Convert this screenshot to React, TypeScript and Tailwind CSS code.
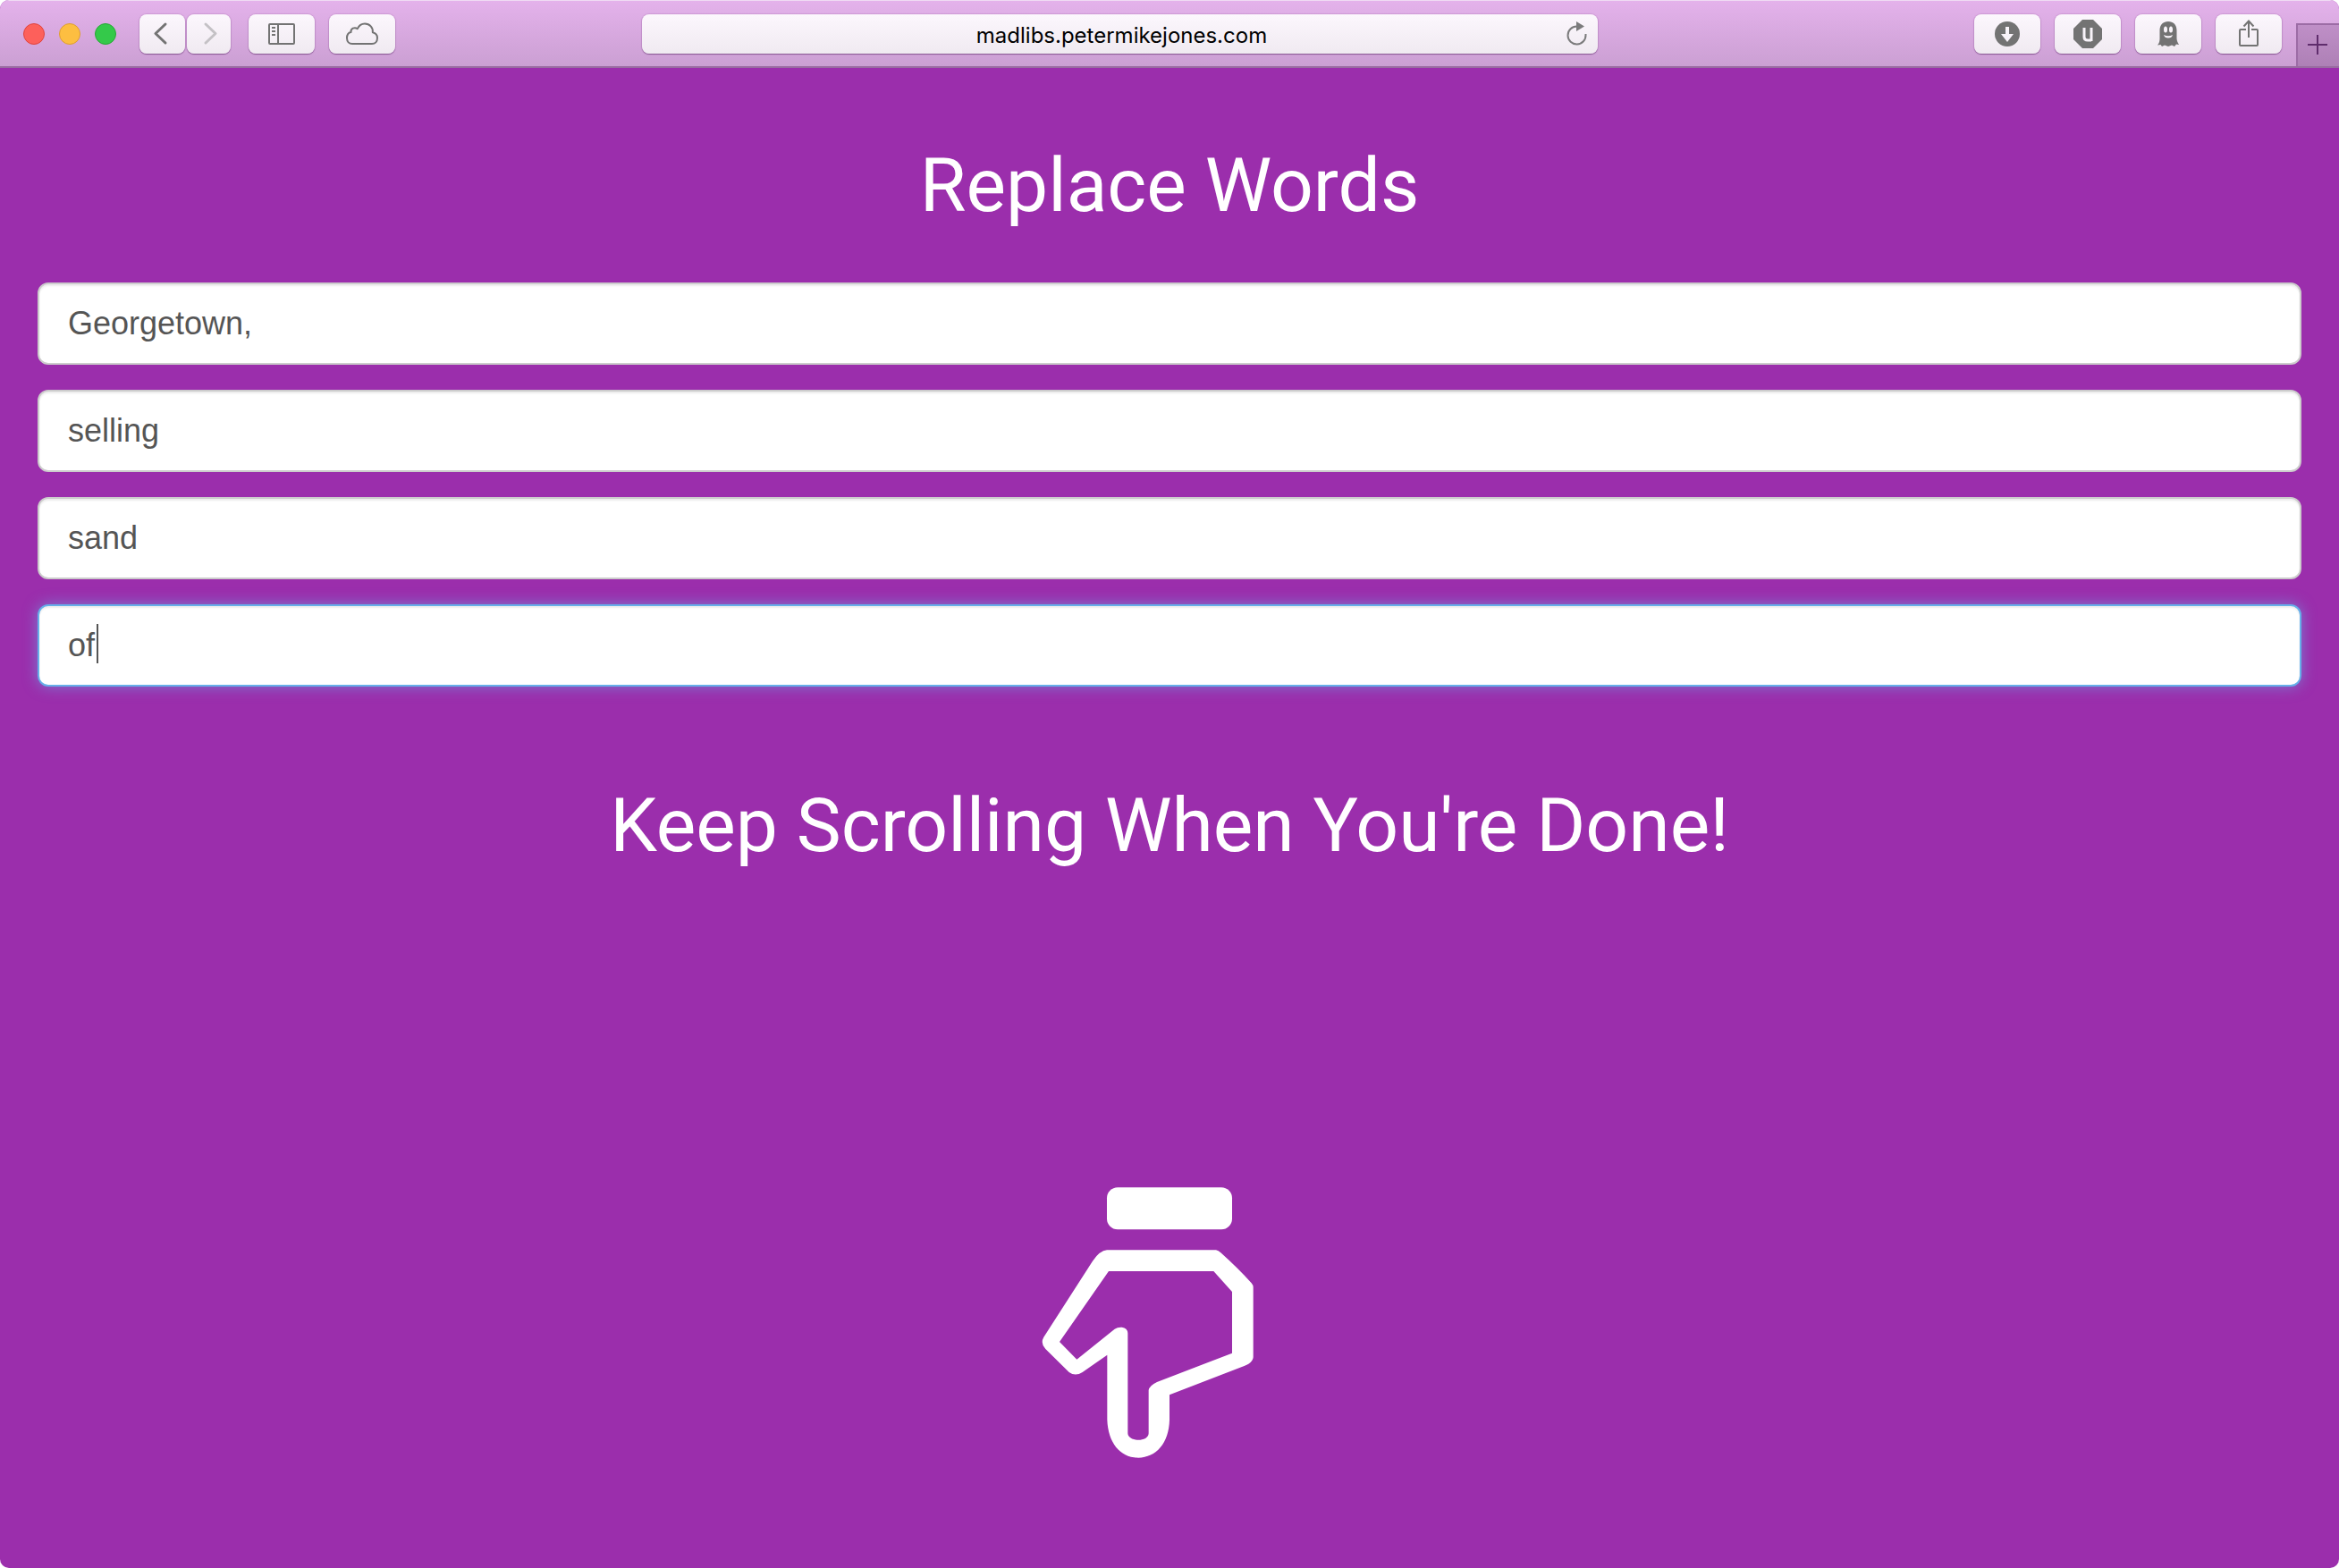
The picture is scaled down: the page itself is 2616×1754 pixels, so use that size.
import type { ReactNode } from "react";

const words = ["Georgetown,", "selling", "sand", "of"];

function ToolButton({ label, size = "w-[74px]", children }: { label: string; size?: string; children: ReactNode }) {
  return (
    <button
      type="button"
      aria-label={label}
      className={`flex h-11 shrink-0 items-center justify-center rounded-lg bg-linear-to-b from-[#fcf7fd] to-[#f0eaf1] text-[#737373] shadow-[0_1px_1px_rgba(90,40,100,0.55),0_0_1px_1px_rgba(150,90,160,0.25)] ${size}`}
    >
      {children}
    </button>
  );
}

function Toolbar() {
  return (
    <header className="flex h-[76px] items-start border-t border-b-2 border-t-[#f0dbf4] border-b-[#996ba1] bg-linear-to-b from-[#e4b2eb] to-[#cb9fd3] pt-[15px]">
      <div className="flex h-11 items-center gap-4 pl-[26px]">
        <button type="button" aria-label="Close" className="size-6 rounded-full border border-[#e0443e] bg-[#fd605b]" />
        <button type="button" aria-label="Minimize" className="size-6 rounded-full border border-[#dd9e33] bg-[#fdbe41]" />
        <button type="button" aria-label="Zoom" className="size-6 rounded-full border border-[#28a836] bg-[#34c94a]" />
      </div>
      <nav className="flex pl-[26px]">
        <div className="flex gap-0.5">
          <ToolButton label="Back" size="w-[51px]">
            <svg width="50" height="44" viewBox="0 0 50 44" fill="none" stroke="currentColor" strokeWidth="3" strokeLinecap="round" strokeLinejoin="round">
              <path d="M28 11 17 21.500 28 32" />
            </svg>
          </ToolButton>
          <ToolButton label="Forward" size="w-[49px]">
            <svg width="48" height="44" viewBox="0 0 48 44" fill="none" stroke="#c4c1c5" strokeWidth="3" strokeLinecap="round" strokeLinejoin="round">
              <path d="M20 11 31 21.500 20 32" />
            </svg>
          </ToolButton>
        </div>
        <div className="flex gap-4 pl-5">
          <ToolButton label="Sidebar">
            <svg width="74" height="44" viewBox="0 0 74 44" fill="none" stroke="currentColor" strokeWidth="2">
              <rect x="23" y="11" width="28" height="22" rx="1" />
              <path d="M33 11V33M26 15h4M26 19h4M26 23h4" />
            </svg>
          </ToolButton>
          <ToolButton label="iCloud Tabs">
            <svg width="74" height="44" viewBox="0 0 74 44" fill="none" stroke="currentColor" strokeWidth="2" strokeLinejoin="round">
              <path d="M26 33C22.500 33 20 30.500 20 26.500C20 23 22 20.500 24.500 20C24 16 28.500 13.800 31.800 16.200C33.500 12.500 36.500 10.500 40 10.500C45.500 10.500 49.500 15 48.800 20.200C52 20.800 54 23.300 54 26.500C54 30.500 51.500 33 48 33Z" />
            </svg>
          </ToolButton>
        </div>
      </nav>
      <div className="flex-[276]" />
      <div className="flex-[1069]">
        <div className="flex h-11 items-center rounded-lg bg-linear-to-b from-[#fcf7fd] to-[#f0eaf1] pr-2.5 pl-10 shadow-[0_1px_1px_rgba(90,40,100,0.55),0_0_1px_1px_rgba(150,90,160,0.25)]">
          <input
            type="text"
            aria-label="Address"
            defaultValue="madlibs.petermikejones.com"
            className="h-11 min-w-0 flex-1 bg-transparent pt-0.5 text-center font-['Inter',sans-serif] text-2xl text-black outline-none"
          />
          <button type="button" aria-label="Reload" className="text-[#7b7b7c]">
            <svg width="26" height="44" viewBox="0 0 26 44" fill="none">
              <path d="M13.500 13.500H12.500A10 10 0 1 0 22.500 23V22" stroke="currentColor" strokeWidth="2" />
              <path d="M12 8 21 13.500 12 19Z" fill="currentColor" />
            </svg>
          </button>
        </div>
      </div>
      <div className="flex-[421]" />
      <nav className="flex gap-4">
        <ToolButton label="Downloads">
          <svg width="74" height="44" viewBox="0 0 74 44">
            <circle cx="37" cy="22" r="14" fill="currentColor" />
            <path d="M35 14h4v8h5l-7 9-7-9h5Z" fill="#f8f3f9" />
          </svg>
        </ToolButton>
        <ToolButton label="Content blocker">
          <svg width="74" height="44" viewBox="0 0 74 44">
            <path d="M31 6H43L53 16V28L43 38H31L21 28V16Z" fill="currentColor" />
            <path d="M33 15V25.500Q33 29 37 29H41M41 15V30" fill="none" stroke="#f8f3f9" strokeWidth="3" />
          </svg>
        </ToolButton>
        <ToolButton label="Ghostery">
          <svg width="74" height="44" viewBox="0 0 74 44">
            <path d="M27.500 18C27.500 11.500 31.500 8 37 8S46.500 11.500 46.500 18V27C46.500 30 48 32 49 34L46 33.500 44 36 41 34.500 37 36 33 34.500 30 36 28.500 34 25 34.500C27 32 27.500 30 27.500 27Z" fill="currentColor" />
            <ellipse cx="34" cy="17" rx="2" ry="3.500" fill="#f8f3f9" />
            <ellipse cx="40" cy="17" rx="2" ry="3.500" fill="#f8f3f9" />
            <path d="M32 23Q37 25.500 42 23Q41 26.500 37 26.500T32 23Z" fill="#f8f3f9" />
          </svg>
        </ToolButton>
        <ToolButton label="Share">
          <svg width="74" height="44" viewBox="0 0 74 44" fill="none" stroke="currentColor" strokeWidth="2">
            <path d="M34 17H28Q27 17 27 18V34Q27 35 28 35H46Q47 35 47 34V18Q47 17 46 17H40M37 26V8M31.500 13.500 37 7.500 42.500 13.500" />
          </svg>
        </ToolButton>
      </nav>
      <button
        type="button"
        aria-label="New tab"
        className="mt-[10px] ml-4 flex h-12 w-12 shrink-0 items-center justify-center border-t-2 border-l-2 border-[#9c6ca5] bg-linear-to-b from-[#bf8fc7] to-[#ae80b6] pr-0.5 pb-0.5"
      >
        <svg width="22" height="22" viewBox="0 0 22 22" stroke="#5f2d6c" strokeWidth="2">
          <path d="M11 0V22M0 11H22" />
        </svg>
      </button>
    </header>
  );
}

function WordField({ value, index, active }: { value: string; index: number; active: boolean }) {
  return (
    <div className="relative">
      <input
        type="text"
        aria-label={`Word ${index + 1}`}
        defaultValue={value}
        className={`block h-[92px] w-full rounded-xl border-2 bg-white px-8 font-['Liberation_Sans',sans-serif] text-4xl text-[#555555] outline-none ${
          active
            ? "border-[#66afe9] shadow-[inset_0_2px_2px_rgba(0,0,0,0.075),0_0_16px_rgba(102,175,233,0.6)]"
            : "border-[#cccccc] shadow-[inset_0_2px_2px_rgba(0,0,0,0.075)]"
        }`}
      />
      {active && <span className="absolute top-[22px] left-[66px] h-11 w-0.5 bg-[#555555]" />}
    </div>
  );
}

function PointingHand() {
  return (
    <svg width="300" height="303" viewBox="54 84 900 909" fill="#ffffff" aria-hidden="true">
      <rect x="294" y="85" width="420" height="141" rx="36" />
      <path
        fillRule="evenodd"
        d="M294 295H660Q668 296 676 304Q735 357 779 406Q785 413 785 420V655Q784 675 745 688L504 781V865C502 942 460 992 399 992C338 992 298 942 295 865V647L212 705Q188 720 167 705L88 627Q70 608 82 587L246 332Q270 297 294 295ZM300 366 135 603 193 662 320 560Q330 553 344 554Q363 556 364 574V910C365 940 434 940 434 910V765Q437 750 462 738L714 641V435L652 366Z"
      />
    </svg>
  );
}

export default function App() {
  return (
    <div className="min-h-screen bg-white">
      <div className="flex min-h-screen flex-col overflow-hidden rounded-[10px] bg-[#9b2eac]">
        <Toolbar />
        <main className="flex flex-col items-center px-[42px] font-['Roboto',sans-serif] text-white">
          <h1 className="pt-20 text-[84px] leading-[104px]">Replace Words</h1>
          <form className="flex w-full flex-col gap-7 pt-14">
            {words.map((word, i) => (
              <WordField key={word} value={word} index={i} active={i === words.length - 1} />
            ))}
          </form>
          <h2 className="pt-[104px] text-[84px] leading-[104px]">Keep Scrolling When You're Done!</h2>
          <div className="pt-[352px]">
            <PointingHand />
          </div>
        </main>
      </div>
    </div>
  );
}
